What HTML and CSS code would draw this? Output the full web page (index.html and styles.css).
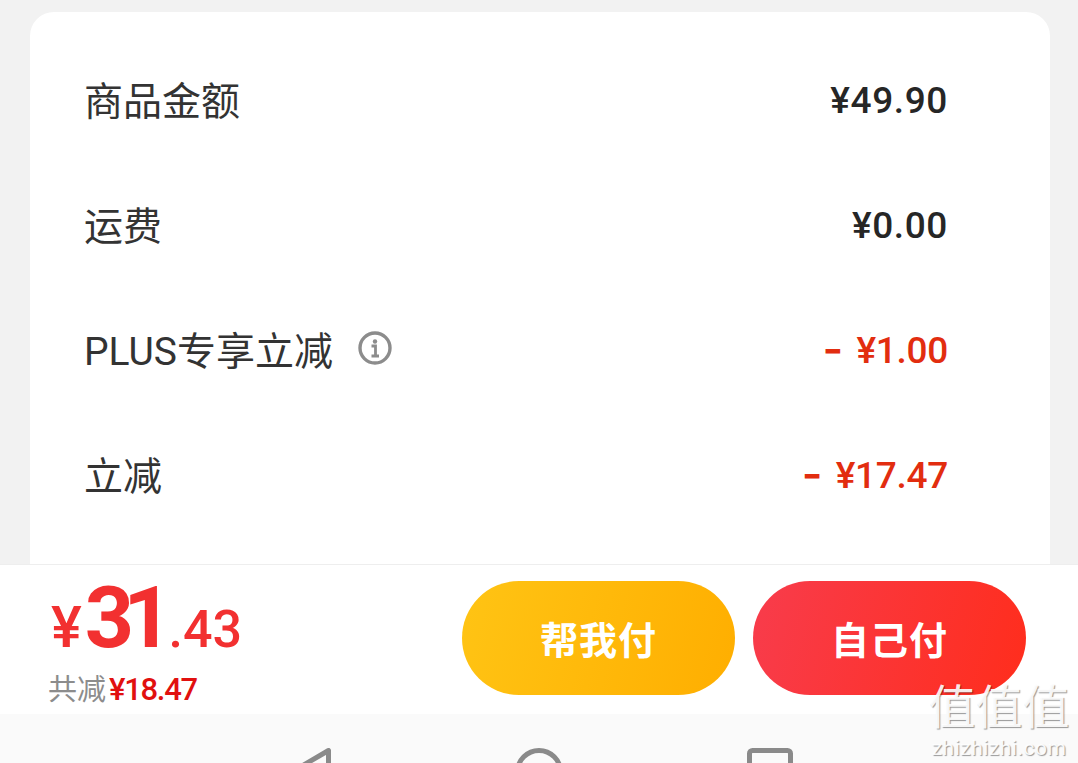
FILE: index.html
```html
<!DOCTYPE html>
<html lang="zh-CN">
<head>
    <meta charset="UTF-8">
    <meta name="viewport" content="width=device-width, initial-scale=1.0">
    <title>订单金额</title>
    <link rel="stylesheet" href="styles.css">
</head>
<body>
    <div class="page">
        <main class="card">
            <div class="row">
                <span class="row-label">商品金额</span>
                <span class="row-value">¥49.90</span>
            </div>
            <div class="row">
                <span class="row-label">运费</span>
                <span class="row-value">¥0.00</span>
            </div>
            <div class="row">
                <span class="row-label">PLUS专享立减
                    <svg class="info-icon" viewBox="0 0 34 34" aria-hidden="true">
                        <circle cx="17" cy="17" r="15" fill="none" stroke="#8c8c8c" stroke-width="3.4"/>
                        <circle cx="17" cy="10.5" r="2.2" fill="#8c8c8c"/>
                        <path d="M13.5 15h4v9.5M13.5 25h7.5" fill="none" stroke="#8c8c8c" stroke-width="2.8"/>
                    </svg>
                </span>
                <span class="row-value discount"><span class="minus">−</span>¥1.00</span>
            </div>
            <div class="row">
                <span class="row-label">立减</span>
                <span class="row-value discount"><span class="minus">−</span>¥17.47</span>
            </div>
        </main>

        <footer class="pay-bar">
            <div class="total">
                <div class="total-price">
                    <span class="price-unit">¥</span><span class="price-big">31</span><span class="price-small">.43</span>
                </div>
                <div class="total-saved">共减<span class="saved-value">¥18.47</span></div>
            </div>
            <div class="pay-actions">
                <button type="button" class="pay-btn pay-btn-friend">帮我付</button>
                <button type="button" class="pay-btn pay-btn-self">自己付</button>
            </div>
        </footer>

        <nav class="nav-bar">
            <svg class="nav-back" viewBox="0 0 36 44" aria-hidden="true">
                <path d="M33.5 2.5v38L1 21.5z" fill="none" stroke="#8a8a8a" stroke-width="5" stroke-linejoin="round"/>
            </svg>
            <svg class="nav-home" viewBox="0 0 48 48" aria-hidden="true">
                <circle cx="24" cy="24" r="21.5" fill="none" stroke="#8a8a8a" stroke-width="5"/>
            </svg>
            <svg class="nav-recent" viewBox="0 0 46 46" aria-hidden="true">
                <rect x="2.5" y="2.5" width="41" height="41" rx="3" fill="none" stroke="#8a8a8a" stroke-width="5"/>
            </svg>
        </nav>

        <div class="watermark">
            <div class="watermark-mark">值值值</div>
            <div class="watermark-url">zhizhizhi.com</div>
        </div>
    </div>
</body>
</html>
```

FILE: styles.css
```css
* {
    margin: 0;
    padding: 0;
    box-sizing: border-box;
}

html, body {
    height: 100%;
    overflow: hidden;
}

body {
    font-family: Roboto, "Noto Sans CJK SC", sans-serif;
    background: #f2f2f2;
}

.page {
    position: relative;
    height: 763px;
    display: flex;
    flex-direction: column;
    overflow: hidden;
}

/* amounts card, runs under the pay bar */
.card {
    flex: 1;
    min-height: 0;
    margin: 12px 28px 0 30px;
    padding: 26px 102px 0 54px;
    background: white;
    border-radius: 24px 24px 0 0;
    overflow: hidden;
}

.row {
    height: 125px;
    display: flex;
    justify-content: space-between;
    align-items: center;
}

.row-label {
    display: flex;
    align-items: center;
    padding-bottom: 5px;
    font-size: 39px;
    color: #333333;
}

.info-icon {
    width: 34px;
    height: 34px;
    margin-left: 25px;
    margin-top: -1px;
}

.row-value {
    font-size: 37px;
    font-weight: 500;
    letter-spacing: 0.6px;
    color: #262626;
}

.discount {
    letter-spacing: -0.3px;
    color: #e22d0f;
}

.minus {
    margin-right: 15px;
    font-weight: 900;
    font-size: 34px;
}

.pay-bar {
    height: 150px;
    display: flex;
    justify-content: space-between;
    align-items: center;
    padding: 0 52px 0 50px;
    background: white;
    border-top: 1px solid #eeeeee;
}

.total {
    padding-top: 3px;
}

.total-price {
    line-height: 86px;
    color: #f23030;
    font-weight: 700;
}

.price-unit {
    margin-left: 1px;
    font-size: 58px;
    font-weight: 500;
}

.price-big {
    margin-left: 3px;
    font-size: 86px;
    letter-spacing: -11px;
}

.price-small {
    margin-left: 7px;
    font-size: 52px;
    font-weight: 500;
}

.total-saved {
    margin: -13px 0 0 -2px;
    font-size: 29px;
    line-height: 36px;
    color: #8c8c8c;
}

.saved-value {
    margin-left: 3px;
    font-size: 31px;
    font-weight: 500;
    letter-spacing: -1.3px;
    color: #e1100f;
}

.pay-actions {
    display: flex;
    gap: 18px;
    margin-bottom: 4px;
}

.pay-btn {
    width: 273px;
    height: 114px;
    border: none;
    border-radius: 57px;
    font-family: inherit;
    font-size: 38px;
    font-weight: 700;
    letter-spacing: 1px;
    color: white;
}

.pay-btn-friend {
    background: linear-gradient(105deg, #ffc414 0%, #ffae00 100%);
}

.pay-btn-self {
    background: linear-gradient(105deg, #f83c4c 0%, #ff2d1c 100%);
}

.nav-bar {
    height: 49px;
    flex-shrink: 0;
    display: flex;
    align-items: flex-start;
    gap: 184px;
    padding: 34px 0 0 295px;
    background: #fafafa;
    overflow: hidden;
}

.nav-back {
    width: 36px;
    height: 44px;
    flex-shrink: 0;
}

.nav-home {
    width: 48px;
    height: 48px;
    flex-shrink: 0;
}

.nav-recent {
    width: 46px;
    height: 46px;
    flex-shrink: 0;
}

.watermark {
    position: absolute;
    right: 8px;
    top: 680px;
    width: 142px;
    text-align: center;
    color: rgba(255, 255, 255, 0.92);
    text-shadow: 1px 1px 1px rgba(0, 0, 0, 0.4);
}

.watermark-mark {
    font-size: 47px;
    line-height: 56px;
}

.watermark-url {
    font-size: 21px;
    line-height: 24px;
    letter-spacing: 0.5px;
}
```
